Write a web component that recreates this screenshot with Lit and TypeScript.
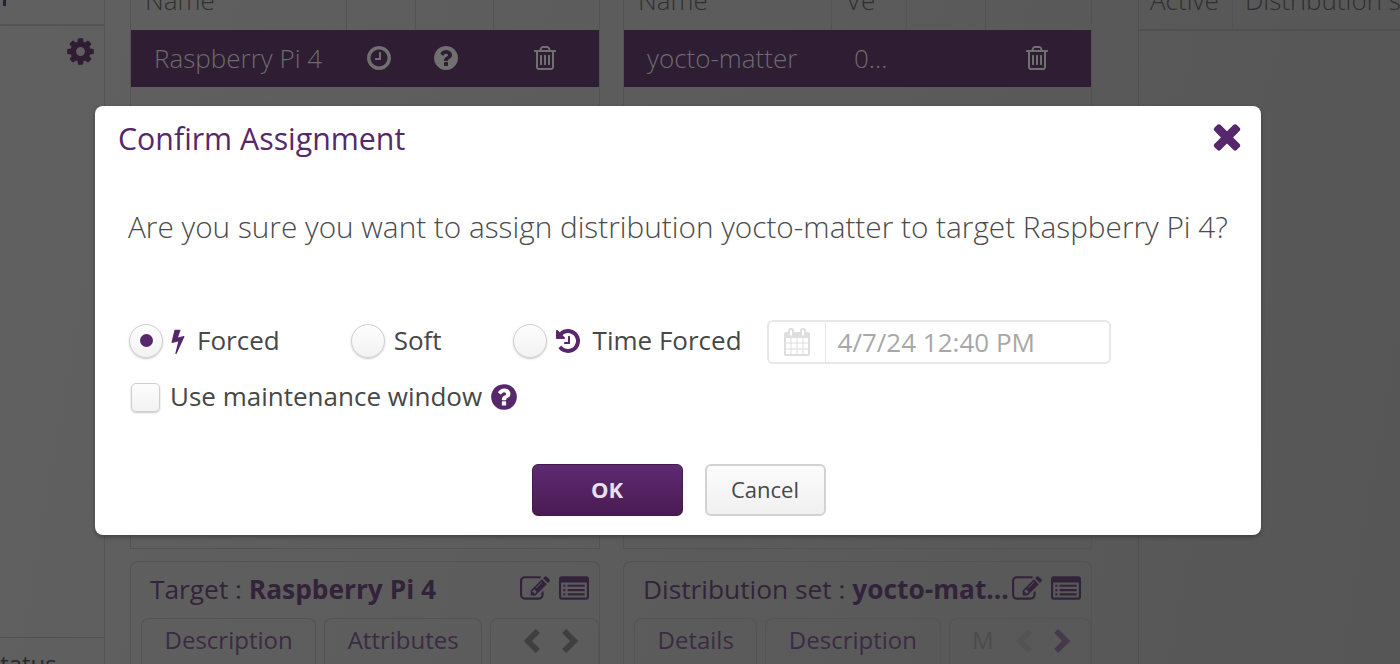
import { LitElement, html, css, svg } from "lit";
import { customElement } from "lit/decorators.js";

const P = {
  cog: "M1152 896q0-106-75-181t-181-75-181 75-75 181 75 181 181 75 181-75 75-181zm512-109v222q0 12-8 23t-20 13l-185 28q-19 54-39 91 35 50 107 138 10 12 10 25t-9 23q-27 37-99 108t-94 71q-12 0-26-9l-138-108q-44 23-91 38-16 136-29 186-7 28-36 28h-222q-14 0-24.500-8.500t-11.500-21.500l-28-184q-49-16-90-37l-141 107q-10 9-25 9-14 0-25-11-126-114-165-168-7-10-7-23 0-12 8-23 15-21 51-66.500t54-70.500q-27-50-41-99l-183-27q-13-2-21-12.500t-8-23.500v-222q0-12 8-23t19-13l186-28q14-46 39-92-40-57-107-138-10-12-10-24 0-10 9-23 26-36 98.500-107.500t94.500-71.500q13 0 26 10l138 107q44-23 91-38 16-136 29-186 7-28 36-28h222q14 0 24.500 8.500t11.500 21.500l28 184q49 16 90 37l142-107q9-9 24-9 13 0 25 10 129 119 165 170 7 8 7 22 0 12-8 23-15 21-51 66.500t-54 70.500q26 50 41 98l183 28q13 2 21 12.500t8 23.500z",
  question: "M1024 1376v-192q0-14-9-23t-23-9h-192q-14 0-23 9t-9 23v192q0 14 9 23t23 9h192q14 0 23-9t9-23zm256-672q0-88-55.500-163t-138.500-116-170-41q-243 0-371 213-15 24 8 42l132 100q7 6 19 6 16 0 25-12 53-68 86-92 34-24 86-24 48 0 85.500 26t37.500 59q0 38-20 61t-68 45q-63 28-115.500 86.500t-52.500 125.500v36q0 14 9 23t23 9h192q14 0 23-9t9-23q0-19 21.500-49.500t54.500-49.500q32-18 49-28.500t46-35 44.500-48 28-60.500 12.500-81zm384 192q0 209-103 385.500t-279.500 279.500-385.500 103-385.500-103-279.500-279.500-103-385.500 103-385.500 279.500-279.500 385.500-103 385.500 103 279.500 279.500 103 385.500z",
  times: "M1490 1322q0 40-28 68l-136 136q-28 28-68 28t-68-28l-294-294-294 294q-28 28-68 28t-68-28l-136-136q-28-28-28-68t28-68l294-294-294-294q-28-28-28-68t28-68l136-136q28-28 68-28t68 28l294 294 294-294q28-28 68-28t68 28l136 136q28 28 28 68t-28 68l-294 294 294 294q28 28 28 68z",
  bolt: "M1333 566q18 20 7 44l-540 1157q-13 25-42 25-4 0-14-2-17-5-25.500-19t-4.500-30l197-808-406 101q-4 1-12 1-18 0-31-11-18-15-13-39l201-825q4-14 16-23t28-9h328q19 0 32 12.500t13 29.500q0 8-5 18l-171 463 396-98q8-2 12-2 19 0 34 15z",
  history: "M1664 896q0 156-61 298t-164 245-245 164-298 61q-172 0-327-72.500t-264-204.500q-7-10-6.500-22.500t8.500-20.500l137-138q10-9 25-9 16 2 23 12 73 95 179 147t225 52q104 0 198.500-40.500t163.500-109.500 109.500-163.500 40.500-198.500-40.500-198.500-109.500-163.500-163.500-109.500-198.500-40.500q-98 0-188 35.500t-160 101.500l137 138q31 30 14 69-17 40-59 40h-448q-26 0-45-19t-19-45v-448q0-42 40-59 39-17 69 14l130 129q107-101 244.500-156.500t284.500-55.500q156 0 298 61t245 164 164 245 61 298zm-640-288v448q0 14-9 23t-23 9h-320q-14 0-23-9t-9-23v-64q0-14 9-23t23-9h224v-352q0-14 9-23t23-9h64q14 0 23 9t9 23z",
  clock: "M1024 544v448q0 14-9 23t-23 9h-320q-14 0-23-9t-9-23v-64q0-14 9-23t23-9h224v-352q0-14 9-23t23-9h64q14 0 23 9t9 23zm416 352q0-148-73-273t-198-198-273-73-273 73-198 198-73 273 73 273 198 198 273 73 273-73 198-198 73-273zm224 0q0 209-103 385.500t-279.500 279.500-385.500 103-385.500-103-279.500-279.500-103-385.500 103-385.500 279.500-279.500 385.500-103 385.500 103 279.500 279.500 103 385.500z",
  trash: "M704 736v576q0 14-9 23t-23 9h-64q-14 0-23-9t-9-23v-576q0-14 9-23t23-9h64q14 0 23 9t9 23zm256 0v576q0 14-9 23t-23 9h-64q-14 0-23-9t-9-23v-576q0-14 9-23t23-9h64q14 0 23 9t9 23zm256 0v576q0 14-9 23t-23 9h-64q-14 0-23-9t-9-23v-576q0-14 9-23t23-9h64q14 0 23 9t9 23zm128 724v-948h-896v948q0 22 7 40.500t14.500 27 10.500 8.500h832q3 0 10.500-8.500t14.500-27 7-40.500zm-672-1076h448l-48-117q-7-9-17-11h-317q-10 2-17 11zm928 32v64q0 14-9 23t-23 9h-96v948q0 83-47 143.500t-113 60.500h-832q-66 0-113-58.500t-47-141.500v-952h-96q-14 0-23-9t-9-23v-64q0-14 9-23t23-9h309l70-167q15-37 54-63t79-26h320q40 0 79 26t54 63l70 167h309q14 0 23 9t9 23z",
  calendar: "M192 1664h288v-288h-288v288zm352 0h320v-288h-320v288zm-352-352h288v-320h-288v320zm352 0h320v-320h-320v320zm-352-384h288v-288h-288v288zm736 736h320v-288h-320v288zm-384-736h320v-288h-320v288zm768 736h288v-288h-288v288zm-384-352h320v-320h-320v320zm-352-864v-288q0-13-9.500-22.500t-22.500-9.500h-64q-13 0-22.500 9.500t-9.500 22.500v288q0 13 9.500 22.500t22.500 9.500h64q13 0 22.500-9.500t9.500-22.500zm736 864h288v-320h-288v320zm-384-384h320v-288h-320v288zm384 0h288v-288h-288v288zm32-480v-288q0-13-9.500-22.500t-22.500-9.500h-64q-13 0-22.500 9.500t-9.500 22.500v288q0 13 9.500 22.500t22.500 9.500h64q13 0 22.500-9.500t9.500-22.500zm384-64v1280q0 52-38 90t-90 38h-1408q-52 0-90-38t-38-90v-1280q0-52 38-90t90-38h128v-96q0-66 47-113t113-47h64q66 0 113 47t47 113v96h384v-96q0-66 47-113t113-47h64q66 0 113 47t47 113v96h128q52 0 90 38t38 90z",
  edit: "M888 1184l116-116-152-152-116 116v56h96v96h56zm440-720q-16-16-33 1l-350 350q-17 17-1 33t33-1l350-350q17-17 1-33zm80 594v190q0 119-84.500 203.500t-203.500 84.500h-832q-119 0-203.500-84.500t-84.500-203.500v-832q0-119 84.500-203.500t203.500-84.500h832q63 0 117 25 15 7 18 23 3 17-9 29l-49 49q-14 14-32 8-23-6-45-6h-832q-66 0-113 47t-47 113v832q0 66 47 113t113 47h832q66 0 113-47t47-113v-126q0-13 9-22l64-64q15-15 35-7t20 29zm-96-738l288 288-672 672h-288v-288zm444 132l-92 92-288-288 92-92q28-28 68-28t68 28l152 152q28 28 28 68t-28 68z",
  list: "M384 1184v64q0 13-9.500 22.500t-22.500 9.500h-64q-13 0-22.500-9.500t-9.500-22.500v-64q0-13 9.500-22.500t22.500-9.500h64q13 0 22.500 9.500t9.500 22.500zm0-256v64q0 13-9.500 22.500t-22.500 9.500h-64q-13 0-22.500-9.500t-9.500-22.500v-64q0-13 9.500-22.500t22.500-9.500h64q13 0 22.500 9.500t9.500 22.500zm0-256v64q0 13-9.500 22.500t-22.500 9.500h-64q-13 0-22.500-9.500t-9.500-22.500v-64q0-13 9.500-22.500t22.500-9.500h64q13 0 22.500 9.500t9.500 22.500zm1152 512v64q0 13-9.500 22.500t-22.500 9.500h-960q-13 0-22.500-9.500t-9.500-22.500v-64q0-13 9.500-22.500t22.500-9.500h960q13 0 22.500 9.500t9.500 22.500zm0-256v64q0 13-9.500 22.500t-22.500 9.500h-960q-13 0-22.500-9.500t-9.500-22.500v-64q0-13 9.500-22.500t22.500-9.500h960q13 0 22.500 9.500t9.500 22.500zm0-256v64q0 13-9.500 22.500t-22.500 9.500h-960q-13 0-22.500-9.500t-9.500-22.500v-64q0-13 9.500-22.500t22.500-9.500h960q13 0 22.500 9.500t9.500 22.500zm128 704v-832q0-13-9.500-22.500t-22.500-9.500h-1472q-13 0-22.500 9.500t-9.500 22.500v832q0 13 9.500 22.500t22.500 9.500h1472q13 0 22.500-9.500t9.500-22.500zm128-1088v1088q0 66-47 113t-113 47h-1472q-66 0-113-47t-47-113v-1088q0-66 47-113t113-47h1472q66 0 113 47t47 113z",
};

const icon = (d: string, cls: string) => html`<svg class="ico ${cls}" viewBox="0 0 1792 1792" aria-hidden="true"><path d=${d} fill="currentColor"></path></svg>`;
const chev = (points: string, cls: string) => html`<svg class="chev ${cls}" viewBox="0 0 24 28" aria-hidden="true">${svg`<polyline points=${points} fill="none" stroke="currentColor" stroke-width="7"></polyline>`}</svg>`;

@customElement("app-root")
export class AppRoot extends LitElement {
  static styles = css`
    :host { display: block; width: 1400px; height: 664px; overflow: hidden; position: relative; font-family: "Open Sans", "Liberation Sans", sans-serif; }
    * { box-sizing: border-box; }
    .ico { display: block; flex: none; }
    .page { display: flex; height: 664px; background: linear-gradient(100deg, #606060 0%, #5b5b5b 55%, #565656 100%); color: #3a3a3a; }

    .nav { width: 105px; flex: none; border-right: 1px solid #545454; display: flex; flex-direction: column; }
    .nav-top { height: 26px; border-bottom: 2px solid #545454; padding-left: 3px; }
    .nav-mark { width: 3px; height: 6px; background: #2e1d33; }
    .nav-gear { flex: 1; display: flex; justify-content: flex-end; padding: 10px 8px 0 0; }
    .gear { width: 31px; height: 31px; color: #2e1d33; }
    .nav-foot { height: 27px; border-top: 1px solid #505050; font-size: 24px; font-weight: 400; color: #2a2a2a; line-height: 52px; overflow: hidden; text-indent: -13px; white-space: nowrap; }

    .col { flex: none; display: flex; flex-direction: column; }
    .col-a { width: 470px; margin-left: 25px; }
    .col-b { width: 469px; margin-left: 23px; }
    .col-c { flex: 1; margin-left: 46px; border-left: 1px solid #505050; }

    .panel { height: 549px; flex: none; border: 1px solid #535353; border-top: 0; }
    .thead { height: 30px; display: flex; }
    .th { border-right: 1px solid #535353; overflow: hidden; font-size: 26px; font-weight: 300; line-height: 24px; color: #2f2f2f; padding-left: 14px; white-space: nowrap; }
    .th:last-child { border-right: 0; flex: 1; }
    .th span { display: block; margin-top: -12px; }
    .w1 { width: 216px; } .w2 { width: 69px; } .w3 { width: 78px; }
    .w4 { width: 208px; } .w5 { width: 75px; } .w6 { width: 79px; }
    .row { height: 57px; padding-bottom: 2px; display: flex; align-items: center; background: #2e1d33; color: #6c6c6c; font-size: 26px; font-weight: 300; position: relative; }
    .cell { flex: none; white-space: nowrap; }
    .row-a .c-name { width: 222px; padding-left: 23px; }
    .row-b .c-name { width: 230px; padding-left: 23px; }
    .c-ico { display: flex; justify-content: center; }
    .row .ico { color: #707070; }
    .i24 { width: 28px; height: 28px; }
    .tr { width: 28px; height: 28px; }

    .card { margin-top: 12px; flex: 1; border: 1px solid #535353; border-bottom: 0; border-radius: 8px 8px 0 0; display: flex; flex-direction: column; position: relative; }
    .card-head { display: flex; align-items: center; height: 56px; padding-bottom: 2px; font-size: 26.3px; color: #33233a; white-space: nowrap; padding-left: 19px; }
    .card-title { flex: 1; min-width: 0; }
    .card-title b { font-weight: 700; }
    .card-icons { display: flex; align-items: center; gap: 9px; color: #33233a; padding-right: 10px; }
    .ci { width: 30px; height: 30px; }
    .tabs { display: flex; gap: 8px; padding-left: 10px; overflow: hidden; flex: 1; }
    .tab { border: 1px solid #545454; border-bottom: 0; border-radius: 8px 8px 0 0; height: 60px; font-size: 24px; font-weight: 400; line-height: 42px; color: #3b2b42; padding: 0 22.5px; white-space: nowrap; }
    .tab.faded { color: #4c4c4c; min-width: 70px; flex: 1; }
    .tab.empty { flex: 1; }
    .chevs { position: absolute; right: 19px; top: 66px; display: flex; gap: 18px; }
    .chev { width: 20px; height: 26px; color: #3f3f3f; display: block; }
    .chev.dim { color: #535353; }
    .chev.mid { color: #453a4a; }

    .thead-c { height: 31px; border-bottom: 2px solid #505050; }
    .thc-1 { width: 94px; padding-left: 11px; }
    .thc-2 { padding-left: 12px; }

    .dialog { position: absolute; left: 95px; top: 106px; width: 1166px; height: 429px; background: #fff; border-radius: 8px; box-shadow: 0 2px 4px rgba(0,0,0,.3); display: flex; flex-direction: column; color: #474747; }
    .title { margin: 13px 0 0 23px; line-height: 40px; font-size: 30.3px; font-weight: 400; color: #57276b; }
    .close { position: absolute; right: 14px; top: 10px; width: 40px; height: 40px; color: #57276b; }
    .msg { margin: 48px 0 0 33px; line-height: 40px; font-size: 29.75px; font-weight: 300; color: #4a4a4a; white-space: nowrap; }
    .opts { margin: 73px 0 0 34px; height: 44px; display: flex; align-items: center; font-size: 26px; }
    .opt { display: flex; align-items: center; height: 36px; margin-top: -3px; }
    .opt span, .maint span { margin-bottom: 2px; }
    .opt.m1 { margin-right: 71px; }
    .opt.m2 { margin-right: 71px; }
    .opt.t { margin-right: 25px; }
    .radio { width: 34px; height: 34px; flex: none; border-radius: 50%; background: linear-gradient(#fdfdfd, #f2f2f2); border: 1px solid #cfcfcf; box-shadow: 0 1px 2px rgba(0,0,0,.22); display: flex; align-items: center; justify-content: center; }
    .dot { width: 13px; height: 13px; border-radius: 50%; background: #57276b; }
    .bolt { width: 26px; height: 26px; color: #57276b; margin: 0 6px 0 2px; }
    .hist { width: 28px; height: 28px; color: #57276b; margin: 0 11px 0 7px; }
    .sl { margin-left: 9px; }
    .date { width: 344px; height: 44px; border: 2px solid #e7e7e7; border-radius: 6px; display: flex; align-items: center; font-weight: 400; color: #a8a8a8; }
    .date-ico { width: 57px; height: 100%; border-right: 1px solid #e7e7e7; display: flex; align-items: center; justify-content: center; flex: none; }
    .cal { width: 28px; height: 28px; color: #dedede; }
    .date-text { padding-left: 12px; white-space: nowrap; }
    .maint { margin: 18px 0 0 36px; height: 30px; display: flex; align-items: center; font-size: 26px; }
    .check { width: 29px; height: 29px; flex: none; border-radius: 5px; border: 1px solid #cfcfcf; background: linear-gradient(#fdfdfd, #f2f2f2); box-shadow: 0 1px 2px rgba(0,0,0,.22); margin-right: 10px; }
    .help { width: 30px; height: 30px; color: #57276b; margin-left: 7px; }
    .btns { margin: 52px 0 0 436.5px; display: flex; gap: 22px; }
    .btn { height: 52px; border-radius: 6px; display: flex; align-items: center; justify-content: center; font-size: 22px; font-family: inherit; padding: 0 0 2px; }
    .ok { width: 151px; font-weight: 700; color: #eadfee; background: linear-gradient(#5e2a72, #4a1b52); border: 1px solid #45194f; }
    .cancel { width: 121px; color: #474747; background: linear-gradient(#fcfcfc, #f0f0f0); border: 2px solid #d2d2d2; }
  `;

  render() {
    return html`
      <div class="page">
        <div class="nav">
          <div class="nav-top"><div class="nav-mark"></div></div>
          <div class="nav-gear">${icon(P.cog, "gear")}</div>
          <div class="nav-foot">Status</div>
        </div>
        <div class="col col-a">
          <div class="panel">
            <div class="thead">
              <div class="th w1"><span>Name</span></div>
              <div class="th w2"></div><div class="th w3"></div><div class="th"></div>
            </div>
            <div class="row row-a">
              <div class="cell c-name">Raspberry Pi 4</div>
              <div class="cell c-ico" style="width:52px">${icon(P.clock, "i24")}</div>
              <div class="cell c-ico" style="width:82px">${icon(P.question, "i24")}</div>
              <div class="cell c-ico" style="width:116px">${icon(P.trash, "tr")}</div>
            </div>
          </div>
          <div class="card">
            <div class="card-head">
              <div class="card-title">Target : <b>Raspberry Pi 4</b></div>
              <div class="card-icons">${icon(P.edit, "ci")}${icon(P.list, "ci")}</div>
            </div>
            <div class="tabs">
              <div class="tab">Description</div><div class="tab">Attributes</div><div class="tab empty"></div>
            </div>
            <div class="chevs">${chev("19,2 7,14 19,26", "")}${chev("5,2 17,14 5,26", "")}</div>
          </div>
        </div>
        <div class="col col-b">
          <div class="panel">
            <div class="thead">
              <div class="th w4"><span>Name</span></div>
              <div class="th w5"><span>Ve</span></div>
              <div class="th w6"></div><div class="th"></div>
            </div>
            <div class="row row-b">
              <div class="cell c-name">yocto-matter</div>
              <div class="cell" style="width:140px">0...</div>
              <div class="cell c-ico" style="width:112px; margin-left:-13px">${icon(P.trash, "tr")}</div>
            </div>
          </div>
          <div class="card">
            <div class="card-head">
              <div class="card-title">Distribution set : <b>yocto-mat...</b></div>
              <div class="card-icons">${icon(P.edit, "ci")}${icon(P.list, "ci")}</div>
            </div>
            <div class="tabs">
              <div class="tab">Details</div><div class="tab">Description</div><div class="tab faded">M</div>
            </div>
            <div class="chevs">${chev("19,2 7,14 19,26", "dim")}${chev("5,2 17,14 5,26", "mid")}</div>
          </div>
        </div>
        <div class="col col-c">
          <div class="thead thead-c">
            <div class="th thc-1"><span>Active</span></div>
            <div class="th thc-2"><span>Distribution set</span></div>
          </div>
        </div>
      </div>

      <div class="dialog" role="dialog">
        <div class="title">Confirm Assignment</div>
        ${icon(P.times, "close")}
        <div class="msg">Are you sure you want to assign distribution yocto-matter to target Raspberry Pi 4?</div>
        <div class="opts">
          <div class="opt m1"><div class="radio"><div class="dot"></div></div>${icon(P.bolt, "bolt")}<span>Forced</span></div>
          <div class="opt m2"><div class="radio"></div><span class="sl">Soft</span></div>
          <div class="opt t"><div class="radio"></div>${icon(P.history, "hist")}<span>Time Forced</span></div>
          <div class="date"><div class="date-ico">${icon(P.calendar, "cal")}</div><div class="date-text">4/7/24 12:40 PM</div></div>
        </div>
        <div class="maint"><div class="check"></div><span>Use maintenance window</span>${icon(P.question, "help")}</div>
        <div class="btns"><button class="btn ok">OK</button><button class="btn cancel">Cancel</button></div>
      </div>
    `;
  }
}
